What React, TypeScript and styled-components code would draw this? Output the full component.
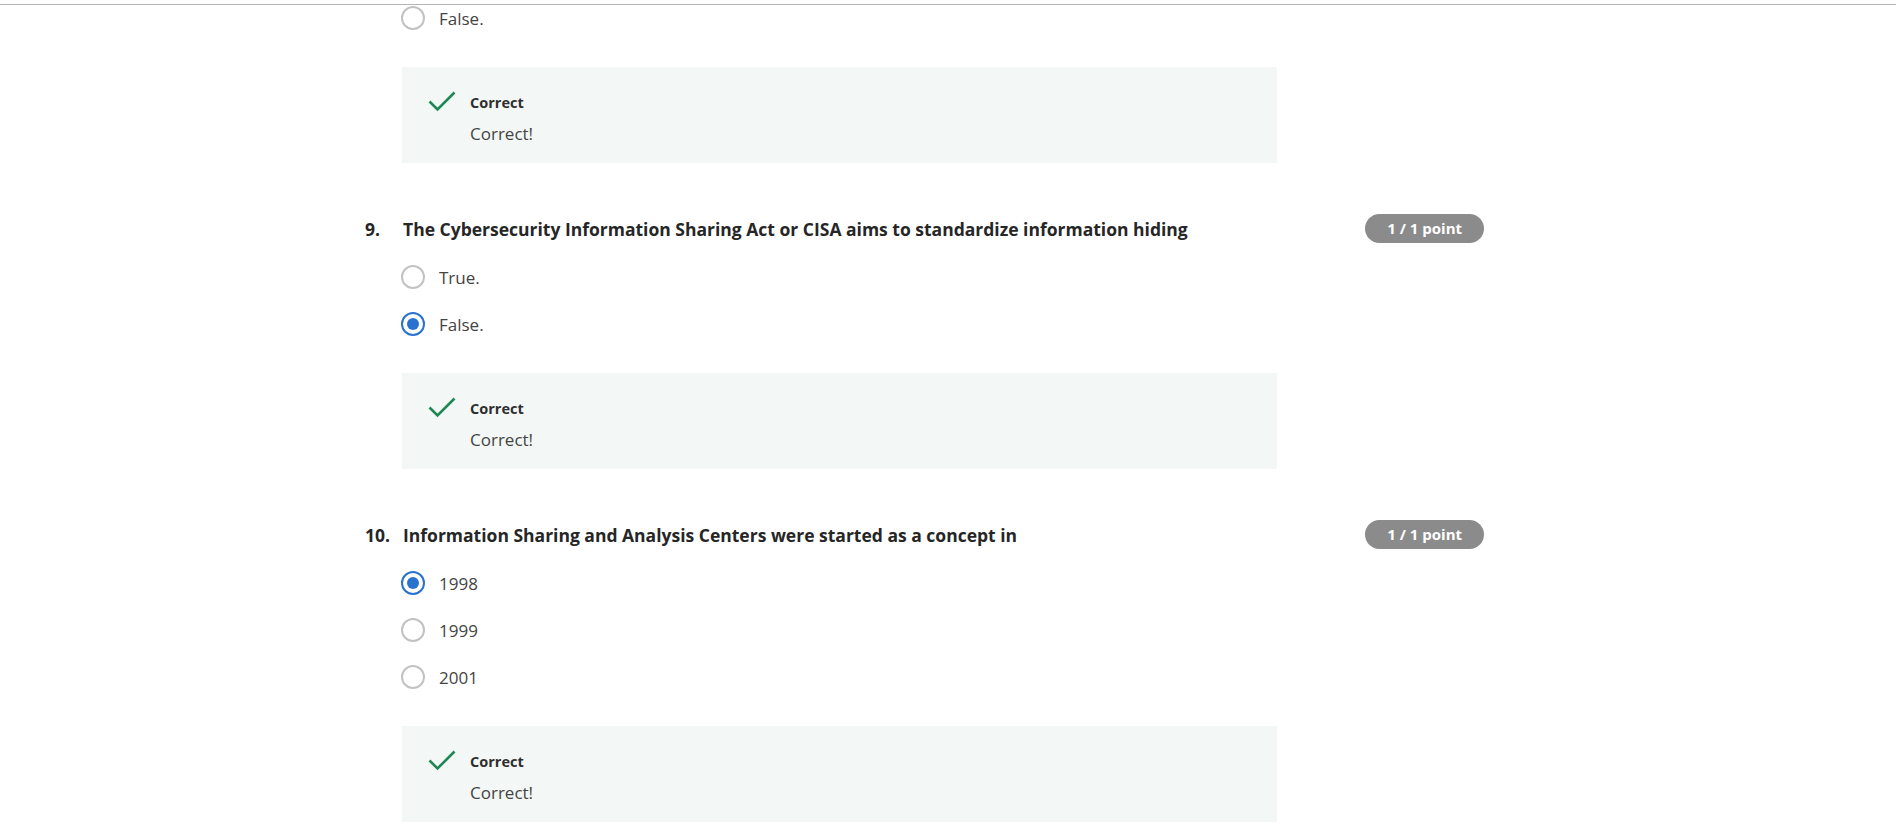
import styled, { createGlobalStyle } from "styled-components";

const GlobalStyle = createGlobalStyle`
  html, body {
    margin: 0;
    padding: 0;
    background: #fff;
  }

  body {
    font-family: "Open Sans", "Noto Sans", sans-serif;
    color: #1f1f1f;
  }
`;

const TopRule = styled.div`
  position: fixed;
  top: 4px;
  left: 0;
  right: 0;
  height: 1px;
  background: #b4b4b4;
`;

const Main = styled.main`
  padding: 2px 0 0 365px;
  width: 1119px;
`;

const Question = styled.section`
  margin-bottom: 51px;
`;

const Header = styled.div`
  display: flex;
  align-items: center;
  height: 29px;
  margin-bottom: 18px;
`;

const Number = styled.span`
  width: 38px;
  flex-shrink: 0;
  font-size: 17.5px;
  font-weight: 700;
  color: #262626;
`;

const Title = styled.h3`
  flex: 1;
  margin: 0;
  font-size: 17.5px;
  font-weight: 700;
  color: #262626;
`;

const Badge = styled.span`
  height: 29px;
  padding: 0 22px;
  border-radius: 15px;
  background: #8b8b8b;
  color: #fff;
  font-size: 15px;
  font-weight: 700;
  line-height: 29px;
  white-space: nowrap;
`;

const Options = styled.div`
  display: flex;
  flex-direction: column;
  gap: 15px;
  padding-left: 36px;
`;

const Option = styled.label`
  display: flex;
  align-items: center;
  height: 32px;
  gap: 14px;
  font-size: 17px;
  color: #444;
`;

const Radio = styled.span<{ $checked?: boolean }>`
  box-sizing: border-box;
  width: 24px;
  height: 24px;
  border-radius: 50%;
  border: 2px solid ${({ $checked }) => ($checked ? "#2a72d0" : "#c2c2c2")};
  display: flex;
  align-items: center;
  justify-content: center;

  &::after {
    content: "";
    display: ${({ $checked }) => ($checked ? "block" : "none")};
    width: 12px;
    height: 12px;
    border-radius: 50%;
    background: #2a72d0;
  }
`;

const Feedback = styled.div`
  display: flex;
  margin: 33px 0 0 37px;
  width: 875px;
  box-sizing: border-box;
  padding: 24px 26px 16px;
  background: #f3f8f6;
  gap: 14px;
`;

const CheckIcon = styled.svg`
  flex-shrink: 0;
`;

const FeedbackBody = styled.div`
  display: flex;
  flex-direction: column;
  gap: 6px;

  strong {
    font-size: 14.5px;
    line-height: 24px;
    font-weight: 700;
    color: #2f2f2f;
  }

  span {
    font-size: 17px;
    line-height: 26px;
    color: #444;
  }
`;

type Choice = { label: string; checked?: boolean };

const Check = () => (
  <CheckIcon width="28" height="21" viewBox="0 0 28 21">
    <polyline
      points="1.5,10.5 9.5,18.5 26.5,1.5"
      fill="none"
      stroke="#1e8756"
      strokeWidth="2.6"
    />
  </CheckIcon>
);

const Result = () => (
  <Feedback>
    <Check />
    <FeedbackBody>
      <strong>Correct</strong>
      <span>Correct!</span>
    </FeedbackBody>
  </Feedback>
);

const ChoiceList = ({ choices }: { choices: Choice[] }) => (
  <Options>
    {choices.map((c) => (
      <Option key={c.label}>
        <Radio $checked={c.checked} />
        {c.label}
      </Option>
    ))}
  </Options>
);

const questions = [
  {
    num: "9.",
    title:
      "The Cybersecurity Information Sharing Act or CISA aims to standardize information hiding",
    choices: [{ label: "True." }, { label: "False.", checked: true }],
  },
  {
    num: "10.",
    title: "Information Sharing and Analysis Centers were started as a concept in",
    choices: [{ label: "1998", checked: true }, { label: "1999" }, { label: "2001" }],
  },
];

export default function App() {
  return (
    <>
      <GlobalStyle />
      <TopRule />
      <Main>
        <Question>
          <ChoiceList choices={[{ label: "False." }]} />
          <Result />
        </Question>
        {questions.map((q) => (
          <Question key={q.num}>
            <Header>
              <Number>{q.num}</Number>
              <Title>{q.title}</Title>
              <Badge>1 / 1 point</Badge>
            </Header>
            <ChoiceList choices={q.choices} />
            <Result />
          </Question>
        ))}
      </Main>
    </>
  );
}
